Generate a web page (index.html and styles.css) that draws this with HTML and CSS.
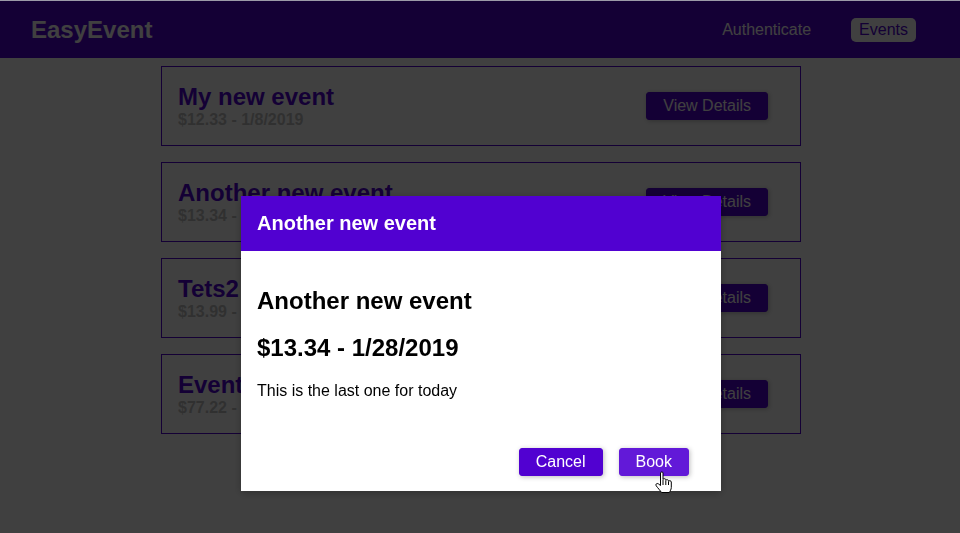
FILE: index.html
```html
<!DOCTYPE html>
<html lang="en">
<head>
<meta charset="utf-8">
<title>EasyEvent</title>
<link rel="stylesheet" href="styles.css">
</head>
<body>
<header class="main-nav">
  <div class="logo"><h1>EasyEvent</h1></div>
  <nav class="nav-items">
    <ul>
      <li><a class="nav-link">Authenticate</a></li>
      <li><a class="nav-link active">Events</a></li>
    </ul>
  </nav>
</header>
<main class="main-content">
  <ul class="events-list">
    <li class="event-item">
      <div><h1>My new event</h1><h2>$12.33 - 1/8/2019</h2></div>
      <div><button class="btn">View Details</button></div>
    </li>
    <li class="event-item">
      <div><h1>Another new event</h1><h2>$13.34 - 1/28/2019</h2></div>
      <div><button class="btn">View Details</button></div>
    </li>
    <li class="event-item">
      <div><h1>Tets2</h1><h2>$13.99 - 1/10/2019</h2></div>
      <div><button class="btn">View Details</button></div>
    </li>
    <li class="event-item">
      <div><h1>Event test</h1><h2>$77.22 - 1/30/2019</h2></div>
      <div><button class="btn">View Details</button></div>
    </li>
  </ul>
</main>
<div class="backdrop"></div>
<div class="modal">
  <header class="modal-header"><h1>Another new event</h1></header>
  <section class="modal-content">
    <h2 class="modal-title">Another new event</h2>
    <h2 class="modal-meta">$13.34 - 1/28/2019</h2>
    <p>This is the last one for today</p>
  </section>
  <section class="modal-actions">
    <button class="btn">Cancel</button>
    <button class="btn hover">Book</button>
  </section>
</div>
<svg class="cursor" width="18" height="23" viewBox="0 0 18 23" aria-hidden="true">
  <path d="M5.5 2 C5.5 0.6 8 0.6 8 2 L8 8.5 C8 7.4 10.8 7.4 10.8 8.8 L10.8 9.5 C10.8 8.4 13.5 8.4 13.5 9.8 L13.5 10.5 C13.5 9.4 16.3 9.4 16.3 11 L16.3 16.5 C16.3 18.5 15 20 14.5 21.5 L6.5 21.5 C5.5 20 2.5 16.5 1.2 14.8 C0.2 13.4 1.8 11.8 3.3 12.8 L5.5 14.5 Z" fill="#fff" stroke="#000" stroke-width="1" stroke-linejoin="round"/>
  <path d="M8 9 V14 M10.8 10 V14 M13.5 11 V14" stroke="#000" stroke-width="1" fill="none"/>
</svg>
</body>
</html>
```

FILE: styles.css
```css
html, body {
  margin: 0;
  padding: 0;
}

body {
  font-family: "Liberation Sans", Arial, sans-serif;
  background: #fff;
  border-top: 1px solid #9c9aa8;
  height: 532px;
}

.main-nav {
  height: 56px;
  padding: 1px 28px 0 31px;
  background: #5101d1;
  display: flex;
  align-items: center;
}

.logo h1 {
  margin: 0;
  font-size: 24px;
  color: #fff;
}

.nav-items {
  margin-left: auto;
}

.nav-items ul {
  list-style: none;
  margin: 0;
  padding: 0;
  display: flex;
  align-items: center;
}

.nav-items li {
  margin: 0 16px;
}

.nav-link {
  display: block;
  font-size: 16px;
  color: #fff;
  padding: 3px 8px;
  border-radius: 5px;
}

.nav-link.active {
  background: #fff;
  color: #5101d1;
}

.main-content {
  padding: 8px 0 0 2px;
}

.events-list {
  list-style: none;
  width: 640px;
  margin: 0 auto;
  padding: 0;
}

.event-item {
  margin: 0 0 16px;
  padding: 16px;
  border: 1px solid #5101d1;
  display: flex;
  justify-content: space-between;
  align-items: center;
}

.event-item h1 {
  margin: 0;
  font-size: 24px;
  color: #5101d1;
}

.event-item h2 {
  margin: 0;
  font-size: 16px;
  color: #c0c0c0;
}

.btn {
  font: inherit;
  font-size: 16px;
  border: 1px solid #5101d1;
  background: #5101d1;
  color: #fff;
  padding: 4px 16px;
  border-radius: 3px;
  box-shadow: 1px 1px 5px rgba(0, 0, 0, 0.26);
  cursor: pointer;
  line-height: normal;
}

.event-item .btn {
  margin-right: 16px;
}

.btn.hover {
  background: #6219d8;
  border-color: #6219d8;
}

.backdrop {
  position: fixed;
  top: 1px;
  left: 0;
  right: 0;
  bottom: 0;
  background: rgba(0, 0, 0, 0.75);
}

.modal {
  position: fixed;
  top: 196px;
  left: 241px;
  width: 480px;
  background: #fff;
  box-shadow: 0 2px 8px rgba(0, 0, 0, 0.26);
}

.modal-header {
  padding: 16px;
  background: #5101d1;
  color: #fff;
}

.modal-header h1 {
  margin: 0;
  font-size: 20px;
}

.modal-content {
  padding: 16px;
  color: #000;
}

.modal-content h2 {
  font-size: 24px;
}

.modal-title {
  margin: 20px 0 19px;
}

.modal-meta {
  margin: 19px 0 20px;
}

.modal-content p {
  font-size: 16px;
  margin: 16px 0;
}

.modal-actions {
  display: flex;
  justify-content: flex-end;
  gap: 16px;
  padding: 16px 32px 15px 16px;
}

.cursor {
  position: fixed;
  left: 655px;
  top: 471px;
}
```
